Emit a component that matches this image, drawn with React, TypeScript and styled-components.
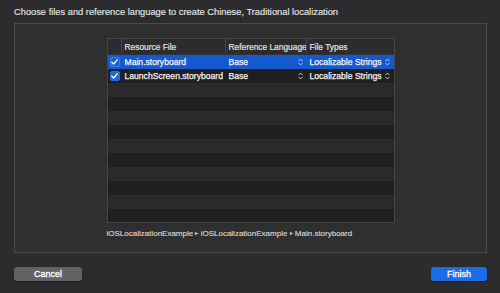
import React from 'react';
import styled, { createGlobalStyle } from 'styled-components';

const GlobalStyle = createGlobalStyle`
  html, body {
    margin: 0;
    background: #2c2c2e;
  }
  body {
    font-family: "Liberation Sans", Arial, sans-serif;
    color: #e4e4e4;
  }
  #root {
    height: 293px;
  }
`;

interface Row {
  file: string;
  language: string;
  type: string;
}

const rows: Row[] = [
  { file: 'Main.storyboard', language: 'Base', type: 'Localizable Strings' },
  { file: 'LaunchScreen.storyboard', language: 'Base', type: 'Localizable Strings' },
];

const TOTAL_ROWS = 12;

function Check() {
  return (
    <svg width="7" height="6" viewBox="0 0 7 6">
      <path d="M0.8 3.2 L2.7 5 L6.2 0.8" fill="none" stroke="#fff" strokeWidth="1.3" strokeLinecap="round" strokeLinejoin="round" />
    </svg>
  );
}

function Stepper() {
  return (
    <svg width="5" height="8" viewBox="0 0 5 8">
      <path d="M0.7 2.9 L2.5 1.1 L4.3 2.9 M0.7 5.1 L2.5 6.9 L4.3 5.1" fill="none" stroke="#d8d8d8" strokeWidth="0.9" strokeLinecap="round" strokeLinejoin="round" />
    </svg>
  );
}

// Sheet asking which files to localize
export default function App() {
  return (
    <>
      <GlobalStyle />
      <Sheet>
        <Title>Choose files and reference language to create Chinese, Traditional localization</Title>
        <Panel>
          <Column>
            <Table>
              <HeaderRow>
                <HeaderCell />
                <HeaderCell>Resource File</HeaderCell>
                <HeaderCell>Reference Language</HeaderCell>
                <HeaderCell $last>File Types</HeaderCell>
              </HeaderRow>
              {Array.from({ length: TOTAL_ROWS }).map((_, i) => {
                const row = rows[i];
                return (
                  <BodyRow key={i} $selected={i === 0} $dark={i % 2 === 1}>
                    <CheckCell>
                      {row && (
                        <CheckBox $selected={i === 0}>
                          <Check />
                        </CheckBox>
                      )}
                    </CheckCell>
                    <Cell>{row?.file}</Cell>
                    <Cell>
                      {row && (
                        <>
                          <span>{row.language}</span>
                          <Stepper />
                        </>
                      )}
                    </Cell>
                    <Cell>
                      {row && (
                        <>
                          <span>{row.type}</span>
                          <Stepper />
                        </>
                      )}
                    </Cell>
                  </BodyRow>
                );
              })}
            </Table>
            <Path>
              iOSLocalizationExample <Sep>▸</Sep> iOSLocalizationExample <Sep>▸</Sep> Main.storyboard
            </Path>
          </Column>
        </Panel>
        <Buttons>
          <Button>Cancel</Button>
          <Button $primary>Finish</Button>
        </Buttons>
      </Sheet>
    </>
  );
}

const Sheet = styled.div`
  height: 293px;
  padding: 0 13px 0 14px;
  display: flex;
  flex-direction: column;
  box-sizing: border-box;
`;

const Title = styled.div`
  height: 23px;
  line-height: 24px;
  font-size: 9.3px;
  color: #e2e2e2;
  white-space: nowrap;
  -webkit-text-stroke: 0.15px #e2e2e2;
`;

const Panel = styled.div`
  height: 230px;
  box-sizing: border-box;
  border: 1px solid #4a4a4b;
  background: #2f2f30;
  padding-top: 14px;
  display: flex;
  justify-content: center;
`;

const Column = styled.div`
  width: 288px;
  display: flex;
  flex-direction: column;
`;

const Table = styled.div`
  height: 185px;
  box-sizing: border-box;
  border: 1px solid #454547;
  background: #29292b;
  overflow: hidden;
`;

const columns = '14px 104px 81px 1fr';

const HeaderRow = styled.div`
  display: grid;
  grid-template-columns: ${columns};
  height: 15px;
  background: #2c2c2e;
  border-bottom: 1px solid #343436;
`;

const HeaderCell = styled.div<{ $last?: boolean }>`
  display: flex;
  align-items: center;
  padding-left: 3px;
  font-size: 8.4px;
  color: #e0e0e0;
  -webkit-text-stroke: 0.2px #e0e0e0;
  border-right: ${(p) => (p.$last ? 'none' : '1px solid #444446')};
  white-space: nowrap;
  overflow: hidden;
`;

const BodyRow = styled.div<{ $selected: boolean; $dark: boolean }>`
  display: grid;
  grid-template-columns: ${columns};
  height: 14px;
  background: ${(p) => (p.$selected ? '#1559d0' : p.$dark ? '#1f1f21' : '#2a2a2c')};
`;

const CheckCell = styled.div`
  display: flex;
  align-items: center;
  justify-content: center;
`;

const CheckBox = styled.div<{ $selected: boolean }>`
  width: 10px;
  height: 10px;
  border-radius: 2px;
  box-sizing: border-box;
  display: grid;
  place-items: center;
  background: ${(p) => (p.$selected ? '#1a5fd6' : '#2168e0')};
  border: 1px solid ${(p) => (p.$selected ? '#3f7fe6' : '#2a6fe4')};
`;

const Cell = styled.div`
  display: flex;
  align-items: center;
  justify-content: space-between;
  padding: 0 4px 0 3px;
  font-size: 8.6px;
  color: #f2f2f2;
  -webkit-text-stroke: 0.25px #f2f2f2;
  white-space: nowrap;
  overflow: hidden;
`;

const Path = styled.div`
  margin-top: 6px;
  font-size: 8px;
  color: #d6d6d6;
  -webkit-text-stroke: 0.15px #d6d6d6;
  white-space: nowrap;
`;

const Sep = styled.span`
  font-size: 6px;
  color: #bdbdbd;
  vertical-align: 1px;
`;

const Buttons = styled.div`
  margin-top: 14px;
  display: flex;
  justify-content: space-between;
`;

const Button = styled.button<{ $primary?: boolean }>`
  height: 14px;
  width: ${(p) => (p.$primary ? '56px' : '68px')};
  padding: 0;
  border-radius: 3px;
  border: none;
  font-family: inherit;
  font-size: 9px;
  color: #ffffff;
  -webkit-text-stroke: 0.3px #ffffff;
  background: ${(p) => (p.$primary ? '#1d6be6' : '#636365')};
  box-shadow: 0 0.5px 1px rgba(0, 0, 0, 0.4);
`;
